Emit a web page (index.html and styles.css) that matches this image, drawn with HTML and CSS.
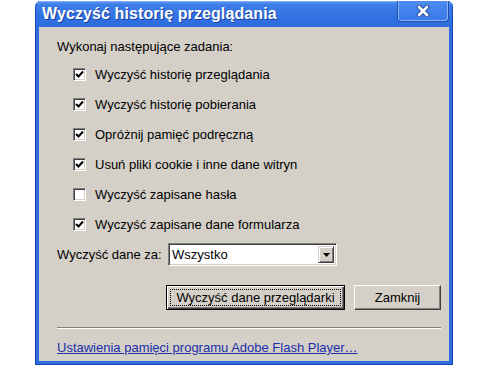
FILE: index.html
```html
<!DOCTYPE html>
<html lang="pl">
<head>
<meta charset="utf-8">
<title>Wyczyść historię przeglądania</title>
<link rel="stylesheet" href="styles.css">
</head>
<body>
<div class="window">
  <div class="titlebar">
    <span class="title">Wyczyść historię przeglądania</span>
    <span class="close">
      <svg width="14" height="12" viewBox="0 0 14 12"><path d="M3 2 L11 10 M11 2 L3 10" stroke="#2a4fa8" stroke-width="4.6" stroke-linecap="round"/><path d="M3 2 L11 10 M11 2 L3 10" stroke="#ffffff" stroke-width="2.6" stroke-linecap="round"/></svg>
    </span>
  </div>
  <div class="client">
    <div class="heading">Wykonaj następujące zadania:</div>
    <div class="options">
      <div class="opt"><span class="cb checked"><svg width="9" height="9" viewBox="0 0 9 9"><path d="M1 4 L3.5 6.5 L8 1.5" fill="none" stroke="#000" stroke-width="2"/></svg></span><span>Wyczyść historię przeglądania</span></div>
      <div class="opt"><span class="cb checked"><svg width="9" height="9" viewBox="0 0 9 9"><path d="M1 4 L3.5 6.5 L8 1.5" fill="none" stroke="#000" stroke-width="2"/></svg></span><span>Wyczyść historię pobierania</span></div>
      <div class="opt"><span class="cb checked"><svg width="9" height="9" viewBox="0 0 9 9"><path d="M1 4 L3.5 6.5 L8 1.5" fill="none" stroke="#000" stroke-width="2"/></svg></span><span>Opróżnij pamięć podręczną</span></div>
      <div class="opt"><span class="cb checked"><svg width="9" height="9" viewBox="0 0 9 9"><path d="M1 4 L3.5 6.5 L8 1.5" fill="none" stroke="#000" stroke-width="2"/></svg></span><span>Usuń pliki cookie i inne dane witryn</span></div>
      <div class="opt"><span class="cb"></span><span>Wyczyść zapisane hasła</span></div>
      <div class="opt"><span class="cb checked"><svg width="9" height="9" viewBox="0 0 9 9"><path d="M1 4 L3.5 6.5 L8 1.5" fill="none" stroke="#000" stroke-width="2"/></svg></span><span>Wyczyść zapisane dane formularza</span></div>
    </div>
    <div class="period">
      <span class="period-label">Wyczyść dane za:</span>
      <div class="select">
        <span class="select-value">Wszystko</span>
        <span class="select-btn"><svg width="7" height="4" viewBox="0 0 7 4"><path d="M0 0 H7 L3.5 4 Z" fill="#000"/></svg></span>
      </div>
    </div>
    <div class="buttons">
      <button class="btn default"><span class="focus">Wyczyść dane przeglądarki</span></button>
      <button class="btn">Zamknij</button>
    </div>
    <div class="separator"></div>
    <a class="link" href="#">Ustawienia pamięci programu Adobe Flash Player…</a>
  </div>
</div>
</body>
</html>
```

FILE: styles.css
```css
html, body {
  margin: 0;
  padding: 0;
  background: #ffffff;
}
body {
  font-family: "Liberation Sans", Arial, sans-serif;
  font-size: 13px;
  color: #000;
}
.window {
  margin: 1px 0 0 35px;
  width: 418px;
  box-sizing: border-box;
  background: #2e6ce0;
  border-radius: 6px 6px 0 0;
  box-shadow: inset 0 0 0 1px #1846b8;
  padding: 0 4px 4px 4px;
}
.titlebar {
  height: 26px;
  display: flex;
  align-items: center;
  justify-content: space-between;
  background: linear-gradient(#5b97f2 0%, #3d7de8 15%, #3271e2 60%, #2e6cdc 100%);
  margin: 0 -4px;
  padding: 0 4px 0 7px;
  border-radius: 6px 6px 0 0;
  box-shadow: inset 0 1px 0 #7fb0f8, inset 1px 0 0 #1846b8, inset -1px 0 0 #1846b8;
}
.title {
  color: #ffffff;
  font-weight: bold;
  font-size: 16px;
  letter-spacing: 0.1px;
  text-shadow: 1px 1px 0 #1a3f9c;
}
.close {
  align-self: flex-start;
  width: 52px;
  height: 21px;
  box-sizing: border-box;
  border: 1px solid #2050b0;
  border-top: none;
  border-radius: 0 0 4px 4px;
  background: linear-gradient(#4e8cf0, #3878e8);
  box-shadow: inset 1px 0 0 #8fb6f4, inset -1px -1px 0 #8fb6f4;
  display: flex;
  align-items: center;
  justify-content: center;
}
.client {
  background: #d4d0c8;
  height: 334px;
  box-sizing: border-box;
  padding: 12px 8px 0 18px;
}
.heading {
  line-height: 16px;
}
.options {
  margin-top: 4px;
}
.opt {
  height: 30px;
  display: flex;
  align-items: center;
  padding-left: 16px;
}
.cb {
  width: 13px;
  height: 13px;
  box-sizing: border-box;
  background: #fff;
  border-top: 1px solid #808080;
  border-left: 1px solid #808080;
  border-right: 1px solid #ffffff;
  border-bottom: 1px solid #ffffff;
  box-shadow: inset 1px 1px 0 #404040, inset -1px -1px 0 #d4d0c8;
  margin-right: 9px;
  display: flex;
  align-items: center;
  justify-content: center;
  flex: none;
}
.period {
  margin-top: 4px;
  display: flex;
  align-items: center;
  height: 23px;
}
.period-label {
  width: 111px;
  flex: none;
}
.select {
  width: 169px;
  height: 23px;
  box-sizing: border-box;
  background: #fff;
  border-top: 1px solid #808080;
  border-left: 1px solid #808080;
  border-right: 1px solid #ffffff;
  border-bottom: 1px solid #ffffff;
  box-shadow: inset 1px 1px 0 #404040, inset -1px -1px 0 #d4d0c8;
  display: flex;
  align-items: stretch;
  padding: 2px;
}
.select-value {
  flex: 1;
  display: flex;
  align-items: center;
  padding-left: 1px;
}
.select-btn {
  width: 16px;
  box-sizing: border-box;
  background: #d4d0c8;
  border-top: 1px solid #d4d0c8;
  border-left: 1px solid #d4d0c8;
  border-right: 1px solid #404040;
  border-bottom: 1px solid #404040;
  box-shadow: inset 1px 1px 0 #ffffff, inset -1px -1px 0 #808080;
  display: flex;
  align-items: center;
  justify-content: center;
}
.buttons {
  margin-top: 19px;
  display: flex;
  justify-content: flex-end;
  gap: 9px;
}
.btn {
  height: 25px;
  font-family: inherit;
  font-size: 13px;
  color: #000;
  background: #d4d0c8;
  box-sizing: border-box;
  border-top: 1px solid #ffffff;
  border-left: 1px solid #ffffff;
  border-right: 1px solid #404040;
  border-bottom: 1px solid #404040;
  box-shadow: inset -1px -1px 0 #808080;
  padding: 0;
  width: 87px;
  border-radius: 0;
}
.btn.default {
  width: 179px;
  border: 1px solid #000;
  box-shadow: inset 1px 1px 0 #ffffff, inset -1px -1px 0 #404040, inset -2px -2px 0 #808080;
  padding: 3px;
}
.focus {
  display: flex;
  align-items: center;
  justify-content: center;
  height: 100%;
  box-sizing: border-box;
  border: 1px dotted #000;
}
.separator {
  margin-top: 17px;
  height: 1px;
  background: #808080;
  border-bottom: 1px solid #ffffff;
}
.link {
  display: block;
  margin-top: 11px;
  line-height: 16px;
  color: #1a2fa8;
  text-decoration: underline;
}
```
